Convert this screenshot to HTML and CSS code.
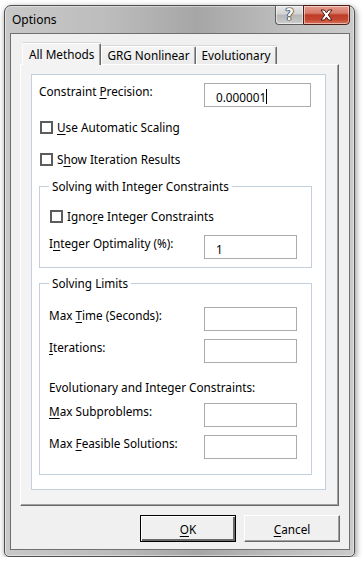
FILE: index.html
```html
<!DOCTYPE html>
<html lang="en">
<head>
  <meta charset="UTF-8">
  <title>Options</title>
  <link rel="stylesheet" href="styles.css">
</head>
<body>

<!-- Solver options dialog -->
<div class="window">
  <div class="titlebar">
    <span class="title">Options</span>
    <div class="caption">
      <span class="cap help">?</span>
      <span class="cap close">
        <svg width="15" height="12" viewBox="0 0 15 12">
          <path d="M2 1 L5.3 1 L7.5 3.8 L9.7 1 L13 1 L9.3 6 L13 11 L9.7 11 L7.5 8.2 L5.3 11 L2 11 L5.7 6 Z" fill="#fff" stroke="#4a1d16" stroke-width="1" stroke-linejoin="round"/>
        </svg>
      </span>
    </div>
  </div>

  <div class="client">
    <div class="tabs">
      <span class="tab selected">All Methods</span>
      <span class="tab">GRG Nonlinear</span>
      <span class="tab">Evolutionary</span>
    </div>

    <div class="tabpanel">
      <div class="page">
        <div class="row first">
          <span class="label wide">Constraint <u>P</u>recision:</span>
          <div class="field big">0.000001<span class="caret"></span></div>
        </div>
        <div class="check cb1"><span class="box"></span><span><u>U</u>se Automatic Scaling</span></div>
        <div class="check cb2"><span class="box"></span><span>S<u>h</u>ow Iteration Results</span></div>

        <fieldset class="group g1">
          <legend>Solving with Integer Constraints</legend>
          <div class="check cb3"><span class="box"></span><span>Igno<u>r</u>e Integer Constraints</span></div>
          <div class="row r-opt">
            <span class="label">I<u>n</u>teger Optimality (%):</span>
            <div class="field">1</div>
          </div>
        </fieldset>

        <fieldset class="group g2">
          <legend>Solving Limits</legend>
          <div class="row">
            <span class="label">Max <u>T</u>ime (Seconds):</span>
            <div class="field"></div>
          </div>
          <div class="row next">
            <span class="label"><u>I</u>terations:</span>
            <div class="field"></div>
          </div>
          <div class="note">Evolutionary and Integer Constraints:</div>
          <div class="row after-note">
            <span class="label"><u>M</u>ax Subproblems:</span>
            <div class="field"></div>
          </div>
          <div class="row next">
            <span class="label">Max <u>F</u>easible Solutions:</span>
            <div class="field"></div>
          </div>
        </fieldset>
      </div>
    </div>

    <div class="buttons">
      <button class="btn default"><u>O</u>K</button>
      <button class="btn"><u>C</u>ancel</button>
    </div>
  </div>
</div>

</body>
</html>
```

FILE: styles.css
```css
* {
  box-sizing: border-box;
}
body {
  margin: 0;
  background: #fff;
  font-family: "Noto Sans", "Open Sans", sans-serif;
  font-size: 11.75px;
  color: #000;
}
u {
  text-decoration: underline;
  text-underline-offset: 2px;
}

/* window frame */
.window {
  width: 351px;
  height: 552px;
  margin: 5px 0 0 4px;
  border: 1px solid #4e4e4e;
  border-radius: 7px 7px 5px 5px;
  padding: 0 4px 6px 5px;
  display: flex;
  flex-direction: column;
  background: linear-gradient(90deg, #c8c8c8, #bcbcbc 30%, #a6a6a6 55%, #bdbdbd 80%, #cbcbcb);
  box-shadow: 1px 2px 6px rgba(0, 0, 0, 0.45), inset 0 0 0 1px rgba(255, 255, 255, 0.45);
}
.titlebar {
  height: 27px;
  display: flex;
  align-items: center;
  justify-content: space-between;
}
.title {
  padding-left: 2px;
  font-size: 12px;
}
.caption {
  align-self: flex-start;
  margin-top: -1px;
  display: flex;
}
.cap {
  height: 20px;
  display: flex;
  align-items: center;
  justify-content: center;
  border: 1px solid #5c5c5c;
  box-shadow: inset 0 0 0 1px rgba(255, 255, 255, 0.5);
}
.help {
  width: 28px;
  border-right: none;
  border-radius: 0 0 0 4px;
  background: linear-gradient(#e8e8e8, #d2d2d2 45%, #b6b6b6 50%, #c4c4c4 85%, #d4d4d4);
  color: #f6f6f6;
  font: bold 15px "DejaVu Sans", sans-serif;
  text-shadow: 0 0 1px #222, 0 0 1px #222, 0 0 1px #222, 0 0 1px #222;
}
.close {
  width: 47px;
  border-radius: 0 0 4px 0;
  background: linear-gradient(#e59c8e, #d67a68 40%, #bd3c28 50%, #c44631 75%, #d9745a);
  border-color: #4a1d16;
}

/* client area */
.client {
  flex: 1;
  border: 1px solid #6f6f6f;
  background: #f0f0f0;
  display: flex;
  flex-direction: column;
}
.tabs {
  display: flex;
  align-items: flex-end;
  height: 21px;
  margin-top: 9px;
  padding-left: 11px;
  position: relative;
  z-index: 1;
}
.tab {
  height: 18px;
  padding: 0 5px;
  line-height: 16px;
  background: linear-gradient(#f4f4f4, #ebebeb);
  border: 1px solid #fff;
  border-bottom: none;
  border-right-color: #696969;
  border-radius: 2px 2px 0 0;
  box-shadow: inset -1px 0 #a0a0a0, 0 -1px #d6d6d6;
}
.tab.selected {
  height: 22px;
  margin-bottom: -1px;
  padding: 2px 6px 0;
  background: #f3f3f3;
}
.tabpanel {
  height: 442px;
  margin: 0 10px 0 9px;
  border: 1px solid;
  border-color: #fff #696969 #696969 #fff;
  box-shadow: inset -1px -1px #a0a0a0;
  background: #f3f3f3;
  padding: 9px 0 0 10px;
}
.page {
  width: 295px;
  height: 416px;
  border: 1px solid #c3cfdb;
  background: #fff;
  padding: 8px 0 0 7px;
}

/* rows */
.row {
  display: flex;
  align-items: flex-start;
  line-height: 16px;
}
.label {
  width: 155px;
  white-space: nowrap;
}
.label.wide {
  width: 165px;
}
.field {
  width: 93px;
  height: 24px;
  border: 1px solid #ababab;
  background: #fff;
  padding: 3px 0 0 11px;
  line-height: 16px;
  display: flex;
  align-items: center;
}
.field.big {
  width: 107px;
}
.caret {
  width: 1px;
  height: 15px;
  background: #000;
}
.check {
  display: flex;
  align-items: center;
  gap: 4px;
  line-height: 16px;
}
.box {
  width: 13px;
  height: 13px;
  margin-left: 1px;
  border: 2px solid #5c5c5c;
  background: #fff;
}
.cb1 {
  margin-top: 12px;
}
.cb2 {
  margin-top: 16px;
}

/* group boxes */
.group {
  width: 273px;
  margin: 0;
  border: 1px solid #c3cfdb;
  padding: 0 0 0 9px;
}
.group legend {
  padding: 0 3px;
  line-height: 16px;
}
.g1 {
  margin-top: 11px;
  padding-bottom: 8px;
}
.cb3 {
  margin-top: 14px;
}
.r-opt {
  margin-top: 11px;
}
.g2 {
  margin-top: 7px;
  padding-top: 16px;
  padding-bottom: 15px;
}
.next {
  margin-top: 8px;
}
.note {
  margin-top: 16px;
  line-height: 16px;
}
.after-note {
  margin-top: 8px;
}

/* dialog buttons */
.buttons {
  display: flex;
  justify-content: flex-end;
  gap: 8px;
  margin-top: 9px;
  padding-right: 9px;
}
.btn {
  width: 96px;
  height: 27px;
  font: inherit;
  color: #000;
  background: #f0f0f0;
  border: 1px solid;
  border-color: #fff #696969 #696969 #fff;
  box-shadow: inset -1px -1px #a0a0a0;
  padding: 0;
}
.btn.default {
  border: 1px solid #000;
  box-shadow: inset 1px 1px #fff, inset -2px -2px #696969;
}
```
